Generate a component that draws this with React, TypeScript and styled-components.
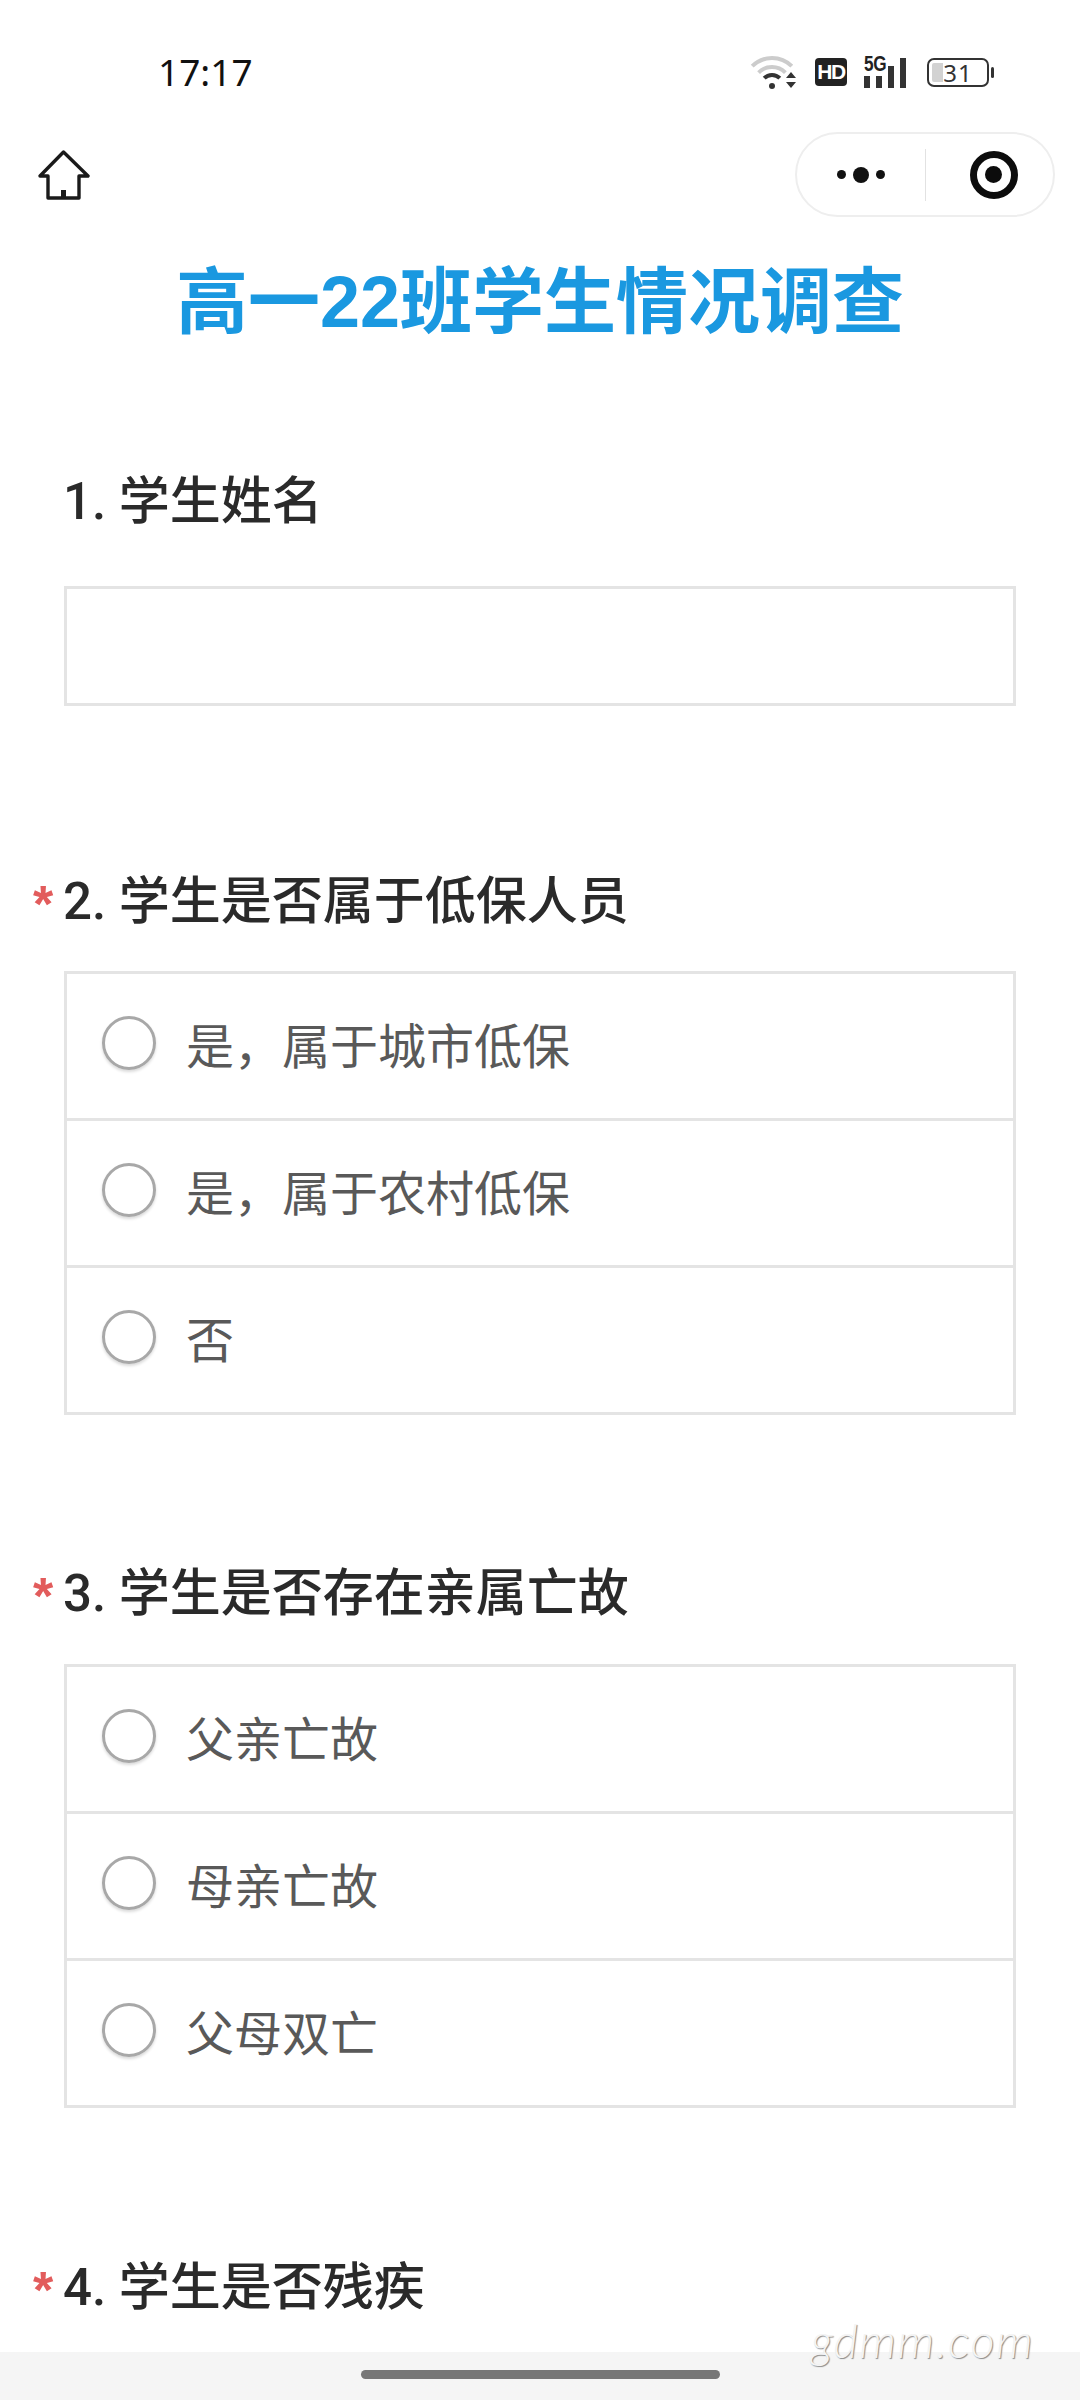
import React from 'react'
import styled, { createGlobalStyle } from 'styled-components'

const GlobalStyle = createGlobalStyle`
  html, body {
    margin: 0;
    padding: 0;
    background: #fff;
  }
  * {
    box-sizing: border-box;
  }
`

const Page = styled.div`
  position: relative;
  width: 1080px;
  height: 2400px;
  overflow: hidden;
  background: #fff;
  font-family: Roboto, 'Noto Sans CJK SC', sans-serif;
`

const StatusBar = styled.div`
  height: 132px;
  padding: 40px 91px 0 158px;
  display: flex;
  justify-content: space-between;
  align-items: flex-start;
`
const Time = styled.div`
  font-family: 'Noto Sans', sans-serif;
  font-size: 37px;
  line-height: 64px;
  color: #111;
`
const StatusIcons = styled.div`
  display: flex;
  align-items: center;
  height: 64px;
`
const Hd = styled.div`
  width: 32px;
  height: 28px;
  margin-left: 17px;
  margin-right: 17px;
  border-radius: 4px;
  background: #222;
  color: #fff;
  font: 700 21px/28px 'Liberation Sans', sans-serif;
  letter-spacing: -1.5px;
  text-align: center;
`
const Signal = styled.div`
  position: relative;
  width: 46px;
  height: 32px;
  display: flex;
  align-items: flex-end;
  gap: 6px;
  margin-right: 17px;
`
const FiveG = styled.span`
  position: absolute;
  left: 0;
  top: -2px;
  font: 700 22px/20px 'Liberation Sans', sans-serif;
  letter-spacing: -0.5px;
  color: #222;
  transform: scaleX(0.78);
  transform-origin: left top;
`
const Bar = styled.i<{ $h: number }>`
  display: block;
  width: 6px;
  height: ${(p) => p.$h}px;
  background: #333;
`
const Battery = styled.div`
  position: relative;
  width: 62px;
  height: 29px;
  border: 2px solid #333;
  border-radius: 7px;
  color: #333;
  font: 400 24px/25px 'Noto Sans', sans-serif;
  letter-spacing: 1px;
  text-align: center;

  &::before {
    content: '';
    position: absolute;
    left: 3px;
    top: 3px;
    bottom: 3px;
    width: 11px;
    background: #d2d2d2;
    border-radius: 2px 0 0 2px;
  }
  &::after {
    content: '';
    position: absolute;
    right: -7px;
    top: 7px;
    width: 3px;
    height: 11px;
    background: #333;
    border-radius: 2px;
  }
`
const BatteryValue = styled.span`
  position: relative;
`

const NavBar = styled.div`
  height: 85px;
  padding: 0 25px 0 38px;
  display: flex;
  justify-content: space-between;
  align-items: center;
`
const Capsule = styled.div`
  width: 260px;
  height: 85px;
  border: 2px solid #eee;
  border-radius: 43px;
  display: flex;
  align-items: center;
  background: #fff;
`
const MenuCell = styled.div`
  width: 128px;
  display: flex;
  align-items: center;
  justify-content: center;
`
const TargetCell = styled.div`
  flex: 1;
  padding-left: 8px;
  display: flex;
  align-items: center;
  justify-content: center;
`
const Divider = styled.div`
  width: 1px;
  height: 52px;
  background: #e2e2e2;
`
const Dots = styled.div`
  display: flex;
  align-items: center;
  gap: 7px;
`
const Dot = styled.i<{ $size: number }>`
  display: block;
  width: ${(p) => p.$size}px;
  height: ${(p) => p.$size}px;
  border-radius: 50%;
  background: #111;
`
const Target = styled.div`
  width: 48px;
  height: 48px;
  border: 7px solid #0c0c0c;
  border-radius: 50%;
  display: flex;
  align-items: center;
  justify-content: center;

  &::after {
    content: '';
    width: 17px;
    height: 17px;
    border-radius: 50%;
    background: #0c0c0c;
  }
`

const Title = styled.h1`
  margin: 35px 0 118px;
  height: 100px;
  font-family: 'Liberation Sans', 'Noto Sans CJK SC', sans-serif;
  font-size: 72px;
  line-height: 100px;
  font-weight: 700;
  text-align: center;
  color: #1a98e0;
`

const Section = styled.section<{ $gap: number }>`
  margin-bottom: ${(p) => p.$gap}px;
  padding-right: 64px;
`
const Question = styled.div<{ $below: number }>`
  display: flex;
  align-items: center;
  height: 60px;
  padding-left: 33px;
  padding-bottom: 6px;
  margin-bottom: ${(p) => p.$below}px;
  font-size: 51px;
  font-weight: 500;
  color: #2a2a2a;
  white-space: pre;
`
const Star = styled.span`
  width: 30px;
  padding-top: 14px;
  font: 700 52px/48px 'Liberation Sans', sans-serif;
  color: #e25c5c;
`
const Box = styled.div`
  margin-left: 64px;
  border: 3px solid #e4e4e4;
`
const InputBox = styled(Box)`
  height: 120px;
`
const Option = styled.div`
  height: 147px;
  padding-left: 35px;
  display: flex;
  align-items: center;
  gap: 30px;
  font-size: 48px;
  color: #595959;
  border-top: 3px solid #e4e4e4;

  &:first-child {
    height: 144px;
    border-top: 0;
  }
`
const OptionText = styled.span`
  padding-bottom: 6px;
`
const Radio = styled.span`
  width: 54px;
  height: 54px;
  margin-top: -6px;
  border: 3px solid #a8a8a8;
  border-radius: 50%;
  box-shadow: 0 2px 3px rgba(0, 0, 0, 0.15);
`

const BottomBar = styled.div`
  position: absolute;
  left: 0;
  right: 0;
  bottom: 0;
  height: 48px;
  background: #f5f5f5;
  display: flex;
  justify-content: center;
  padding-top: 18px;
`
const Handle = styled.div`
  width: 359px;
  height: 9px;
  border-radius: 5px;
  background: #777;
`
const Watermark = styled.div`
  position: absolute;
  left: 811px;
  top: 2312px;
  font: italic 300 47px/56px Lato, sans-serif;
  letter-spacing: 1.5px;
  color: #f4f4f4;
  text-shadow: 1px 1px 1px #8a8a8a;
`

const WifiIcon = () => (
  <svg width="48" height="42" viewBox="0 0 48 42" fill="none">
    <path d="M2.2 15.2A28 28 0 0 1 41.8 15.2" stroke="#ccc" strokeWidth="4" />
    <path d="M8.6 21.6A19 19 0 0 1 35.4 21.6" stroke="#ccc" strokeWidth="4" />
    <path d="M14.2 27.2A11 11 0 0 1 29.8 27.2" stroke="#333" strokeWidth="4" />
    <circle cx="22" cy="35" r="3" fill="#333" />
    <path d="M36 27L41 21L46 27Z M36 31L46 31L41 37Z" fill="#333" />
  </svg>
)

const HomeIcon = () => (
  <svg width="52" height="50" viewBox="0 0 52 50" fill="none">
    <path
      d="M2 26L25.5 2L50 26H41V48H10V26Z"
      stroke="#1a1a1a"
      strokeWidth="3.4"
      strokeLinejoin="round"
    />
    <rect x="23" y="40" width="5" height="8" fill="#1a1a1a" />
  </svg>
)

const questions = [
  {
    no: 2,
    label: '学生是否属于低保人员',
    options: ['是，属于城市低保', '是，属于农村低保', '否'],
    below: 41,
    gap: 147,
  },
  {
    no: 3,
    label: '学生是否存在亲属亡故',
    options: ['父亲亡故', '母亲亡故', '父母双亡'],
    below: 42,
    gap: 148,
  },
]

const App = () => (
  <Page>
    <GlobalStyle />
    <StatusBar>
      <Time>17:17</Time>
      <StatusIcons>
        <WifiIcon />
        <Hd>HD</Hd>
        <Signal>
          <FiveG>5G</FiveG>
          <Bar $h={12} />
          <Bar $h={12} />
          <Bar $h={22} />
          <Bar $h={30} />
        </Signal>
        <Battery>
          <BatteryValue>31</BatteryValue>
        </Battery>
      </StatusIcons>
    </StatusBar>
    <NavBar>
      <HomeIcon />
      <Capsule>
        <MenuCell>
          <Dots>
            <Dot $size={9} />
            <Dot $size={16} />
            <Dot $size={9} />
          </Dots>
        </MenuCell>
        <Divider />
        <TargetCell>
          <Target />
        </TargetCell>
      </Capsule>
    </NavBar>
    <Title>高一22班学生情况调查</Title>
    <Section $gap={164}>
      <Question $below={56}>
        <Star />
        1. 学生姓名
      </Question>
      <InputBox />
    </Section>
    {questions.map((q) => (
      <Section key={q.no} $gap={q.gap}>
        <Question $below={q.below}>
          <Star>*</Star>
          {q.no}. {q.label}
        </Question>
        <Box>
          {q.options.map((o) => (
            <Option key={o}>
              <Radio />
              <OptionText>{o}</OptionText>
            </Option>
          ))}
        </Box>
      </Section>
    ))}
    <Section $gap={0}>
      <Question $below={0}>
        <Star>*</Star>
        4. 学生是否残疾
      </Question>
    </Section>
    <BottomBar>
      <Handle />
    </BottomBar>
    <Watermark>gdmm.com</Watermark>
  </Page>
)

export default App
